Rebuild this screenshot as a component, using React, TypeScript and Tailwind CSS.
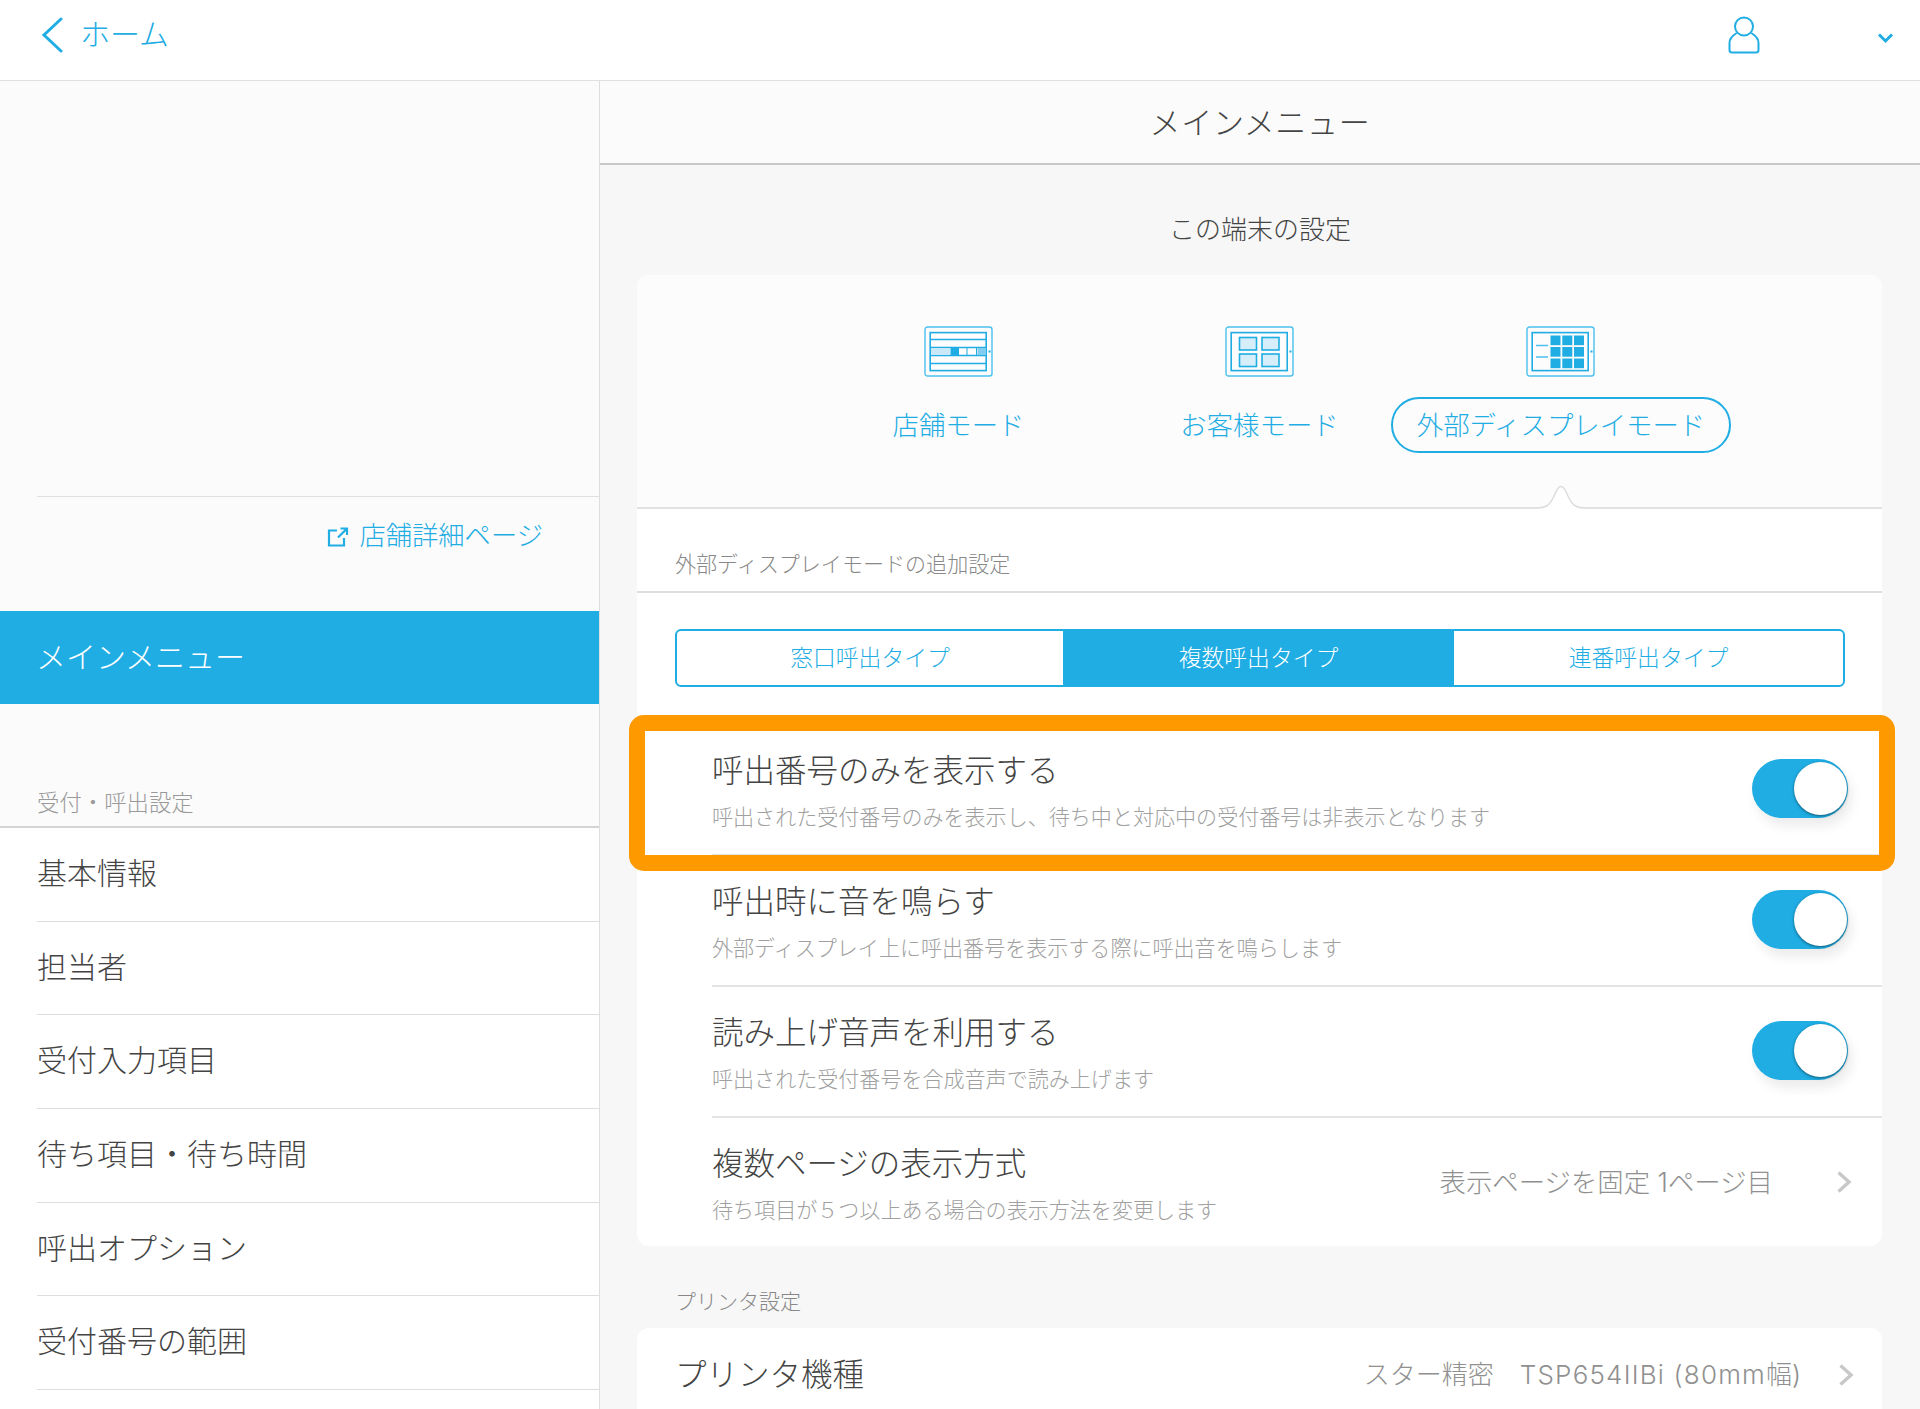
import React from "react";

const menuItems = ["基本情報", "担当者", "受付入力項目", "待ち項目・待ち時間", "呼出オプション", "受付番号の範囲"];

const settingRows = [
  { title: "呼出番号のみを表示する", sub: "呼出された受付番号のみを表示し、待ち中と対応中の受付番号は非表示となります" },
  { title: "呼出時に音を鳴らす", sub: "外部ディスプレイ上に呼出番号を表示する際に呼出音を鳴らします" },
  { title: "読み上げ音声を利用する", sub: "呼出された受付番号を合成音声で読み上げます" },
];

const Tablet = ({ children }: { children: React.ReactNode }) => (
  <svg width="70" height="52" viewBox="0 0 70 52" fill="none">
    <rect x="1" y="1" width="67" height="49" rx="2.5" stroke="#4cc0ee" strokeWidth="1.4" />
    <rect x="6.2" y="6.6" width="56" height="38" stroke="#20ade4" strokeWidth="1.6" />
    <rect x="64.5" y="24.5" width="2" height="2" fill="#20ade4" />
    {children}
  </svg>
);

const StoreIcon = () => (
  <Tablet>
    <path d="M6 13.5H62M6 21.5H62M6 29.5H62M6 37.5H62" stroke="#20ade4" strokeWidth="1.4" />
    <rect x="7" y="22" width="19" height="7" fill="#c9e9f8" />
    <rect x="26.5" y="22" width="7.5" height="7.5" fill="#20ade4" />
    <rect x="53.5" y="22" width="8.5" height="7" fill="#7fcdf0" />
    <path d="M34.5 21.5V29.5M43 21.5V29.5M52.5 21.5V29.5" stroke="#20ade4" strokeWidth="1" />
  </Tablet>
);

const CustomerIcon = () => (
  <Tablet>
    {[[14.5, 11.5], [37, 11.5], [14.5, 28], [37, 28]].map(([x, y]) => (
      <rect key={`${x}-${y}`} x={x} y={y} width="17" height="12.5" fill="#d6eefa" stroke="#20ade4" strokeWidth="1.6" />
    ))}
  </Tablet>
);

const DisplayIcon = () => (
  <Tablet>
    <path d="M10 19.5H22M10 31H22" stroke="#4cc0ee" strokeWidth="1.4" />
    {[24.5, 36.3, 48].map((x) =>
      [9.5, 21, 32.5].map((y) => <rect key={`${x}-${y}`} x={x} y={y} width="10" height="9.7" fill="#20ade4" />)
    )}
  </Tablet>
);

const Toggle = () => (
  <div className="relative mb-[2px] h-[59px] w-[96px] shrink-0 rounded-full bg-[#1fade4] shadow-[4px_8px_12px_rgba(0,0,0,0.08)]">
    <div className="absolute right-[1px] top-[3px] h-[53px] w-[53px] rounded-full bg-white shadow-[0_1px_3px_rgba(0,0,0,0.5)]" />
  </div>
);

const Chevron = ({ className }: { className?: string }) => (
  <svg className={className} width="16" height="24" viewBox="0 0 16 24" fill="none">
    <path d="M2.5 2.5L13 12L2.5 21.5" stroke="#c8c8c8" strokeWidth="3.4" />
  </svg>
);

export default function App() {
  return (
    <div className="flex h-[1409px] flex-col overflow-hidden bg-white font-light text-[#444] [font-family:Inter,'Noto_Sans_CJK_JP',sans-serif]">
      <header className="flex h-[81px] shrink-0 items-center border-b border-[#e0e0e0] bg-white pb-[10px] text-[#1fade4]">
        <svg className="ml-[41px]" width="22" height="36" viewBox="0 0 22 36" fill="none">
          <path d="M20 2L3 18L20 34" stroke="#1fade4" strokeWidth="3" strokeLinecap="round" />
        </svg>
        <span className="mb-[2px] ml-[17px] text-[30px] leading-none">ホーム</span>
        <svg className="ml-auto" width="34" height="38" viewBox="0 0 34 38" fill="none">
          <circle cx="17" cy="10.5" r="9" stroke="#1fade4" strokeWidth="2" />
          <path d="M9 17.5C5 20 2.5 23 2.5 27V34C2.5 35.5 3.5 36.5 5 36.5H29C30.5 36.5 31.5 35.5 31.5 34V27C31.5 23 29 20 25 17.5" stroke="#1fade4" strokeWidth="2" strokeLinecap="round" />
        </svg>
        <svg className="ml-[116px] mr-[26px] mt-[6px]" width="17" height="12" viewBox="0 0 17 12" fill="none">
          <path d="M2 2.5L8.5 9L15 2.5" stroke="#1fade4" strokeWidth="3" />
        </svg>
      </header>

      <div className="flex min-h-0 flex-1">
        <aside className="flex w-[600px] shrink-0 flex-col border-r border-[#dedede] bg-[#fbfbfb]">
          <div className="h-[416px] shrink-0 pl-[37px]">
            <div className="h-full border-b border-[#e0e0e0]" />
          </div>
          <a className="flex h-[114px] shrink-0 items-start justify-end pr-[56px] pt-[21px] text-[26.3px] leading-[36px] text-[#1fade4]">
            <svg className="mr-[10px] mt-[9px]" width="22" height="20" viewBox="0 0 22 20" fill="none">
              <path d="M10 3.5H2V18.5H17V11M11 10.5L20 1.5M13.5 1.5H20V8" stroke="#1fade4" strokeWidth="2.2" />
            </svg>
            店舗詳細ページ
          </a>
          <div className="flex h-[93px] shrink-0 items-center bg-[#1fade4] pl-[36px] text-[30px] text-white">メインメニュー</div>
          <div className="flex h-[124px] shrink-0 items-end border-b-2 border-[#d4d4d4] pb-[8px] pl-[37px] text-[22.4px] leading-[30px] text-[#999]">受付・呼出設定</div>
          <div className="flex-1 bg-white pl-[37px]">
            {menuItems.map((item) => (
              <div key={item} className="flex h-[93.7px] items-center border-b border-[#dedede] pb-[2px] text-[30px] text-[#444]">{item}</div>
            ))}
          </div>
        </aside>

        <main className="min-w-0 flex-1 bg-[#f7f7f7]">
          <div className="flex h-[84px] items-center justify-center border-b-2 border-[#c8c8c8] bg-[#fbfbfb] pt-[2px] text-[31px] tracking-[0.7px]">メインメニュー</div>
          <div className="flex h-[110px] items-center justify-center pt-[18px] text-[26px]">この端末の設定</div>

          <section className="ml-[37px] mr-[38px] rounded-[12px] bg-white">
            <div className="flex h-[234px] justify-center rounded-t-[12px] border-b-2 border-[#e2e2e2] bg-[#fcfcfc] pt-[1px] text-[26.4px] text-[#1fade4]">
              <div className="flex w-[301px] flex-col items-center pt-[50px]">
                <StoreIcon />
                <div className="mt-[20px] flex h-[56px] items-center whitespace-nowrap">店舗モード</div>
              </div>
              <div className="flex w-[301px] flex-col items-center pt-[50px]">
                <CustomerIcon />
                <div className="mt-[20px] flex h-[56px] items-center whitespace-nowrap">お客様モード</div>
              </div>
              <div className="relative flex w-[301px] flex-col items-center pt-[50px]">
                <DisplayIcon />
                <div className="ml-[1px] mt-[19px] flex h-[56px] items-center whitespace-nowrap rounded-full border-2 border-[#1fade4] px-[24px] pt-[2px]">外部ディスプレイモード</div>
                <svg className="absolute -bottom-[2px] left-1/2 -translate-x-1/2" width="46" height="24" viewBox="0 0 46 24" fill="none">
                  <path d="M0 23C8 23 12 20 16 14L20 5C21.5 1.5 24.5 1.5 26 5L30 14C34 20 38 23 46 23V24H0Z" fill="#fff" />
                  <path d="M0 23C8 23 12 20 16 11C18 6 20 1.5 23 1.5C26 1.5 28 6 30 11C34 20 38 23 46 23" stroke="#dcdcdc" strokeWidth="1.4" />
                </svg>
              </div>
            </div>

            <div className="flex h-[84px] items-end border-b-2 border-[#dedede] pb-[11px] pl-[38px] text-[21.05px] leading-[30px] text-[#888]">外部ディスプレイモードの追加設定</div>

            <div className="ml-[38px] mr-[37px] mt-[36px] flex h-[58px] overflow-hidden rounded-[6px] border-2 border-[#1fade4] text-[22.8px] text-[#1fade4]">
              <div className="flex w-[386px] items-center justify-center">窓口呼出タイプ</div>
              <div className="flex w-[391px] items-center justify-center bg-[#1fade4] text-white">複数呼出タイプ</div>
              <div className="flex flex-1 items-center justify-center">連番呼出タイプ</div>
            </div>

            <div className="mt-[38px]">
              {settingRows.map((row, i) => (
                <div key={row.title} className="relative h-[131px] pl-[75px]">
                  {i === 0 && (
                    <div className="pointer-events-none absolute -bottom-[15px] -left-[8px] -right-[13px] -top-[10px] z-10 rounded-[15px] border-[16px] border-[#ff9900]" />
                  )}
                  <div className="flex h-full items-center border-b-2 border-[#e4e4e4] pr-[34px]">
                    <div className="min-w-0 flex-1 pt-[2px]">
                      <div className="text-[31.5px] leading-[44px] text-[#444]">{row.title}</div>
                      <div className="mt-[10px] text-[21.05px] leading-[30px] text-[#a0a0a0]">{row.sub}</div>
                    </div>
                    <Toggle />
                  </div>
                </div>
              ))}
              <div className="flex h-[128px] items-center pl-[75px] pr-[30px]">
                <div className="min-w-0 flex-1 pt-[4px]">
                  <div className="text-[31.5px] leading-[44px] text-[#444]">複数ページの表示方式</div>
                  <div className="mt-[10px] text-[21.05px] leading-[30px] text-[#a0a0a0]">待ち項目が５つ以上ある場合の表示方法を変更します</div>
                </div>
                <span className="text-[26.4px] leading-none text-[#909090]">表示ページを固定 1ページ目</span>
                <Chevron className="ml-[63px]" />
              </div>
            </div>
          </section>

          <div className="flex h-[82px] items-end pb-[11px] pl-[75px] text-[21px] leading-[30px] text-[#888]">プリンタ設定</div>

          <section className="ml-[37px] mr-[38px] flex h-[120px] items-start rounded-t-[12px] bg-white pl-[38px] pr-[28px] pt-[25px]">
            <span className="flex-1 text-[31.5px] leading-[44px] text-[#444]">プリンタ機種</span>
            <span className="text-[26px] leading-[44px] text-[#909090]">スター精密　<span className="tracking-[1.2px]">TSP654IIBi (80mm</span>幅)</span>
            <Chevron className="ml-[37px] mt-[10px]" />
          </section>
        </main>
      </div>
    </div>
  );
}
